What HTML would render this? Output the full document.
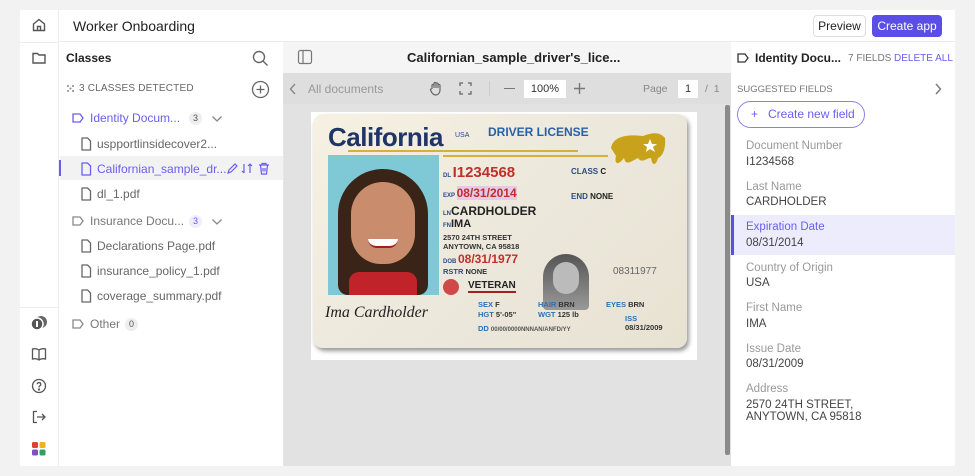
<!DOCTYPE html>
<html><head><meta charset="utf-8">
<style>
*{box-sizing:border-box;margin:0;padding:0}
body{width:975px;height:476px;background:#f2f2f2;font-family:"Liberation Sans",sans-serif;position:relative;overflow:hidden;color:#222}
.abs{position:absolute}
.app{left:20px;top:10px;width:935px;height:456px;background:#fff}
.rail{left:20px;top:10px;width:39px;height:456px;border-right:1px solid #ececec;background:#fff}
.hdr{left:59px;top:10px;width:896px;height:32px;border-bottom:1px solid #ececec;background:#fff}
.t{position:absolute;white-space:nowrap}
.file{font-size:12px;color:#666}
.ico{position:absolute}
.lbl{font-size:11.5px;color:#999}
.val{font-size:11.5px;color:#444}
</style></head><body>
<svg width="0" height="0" style="position:absolute"><defs>
<symbol id="doc" viewBox="0 0 12 14"><path d="M2 1H7.5L10.5 4V13H2Z" fill="none" stroke="currentColor" stroke-width="1.3" stroke-linejoin="round"/></symbol>
<symbol id="chev" viewBox="0 0 12 8"><path d="M1.5 1.5L6 6 10.5 1.5" fill="none" stroke="#888" stroke-width="1.3"/></symbol>
</defs></svg>
<div class="abs app"></div>
<div class="abs rail"></div>
<div class="abs hdr"></div>
<div class="abs" style="left:20px;top:42px;width:39px;height:1px;background:#ececec"></div>
<div class="abs" style="left:20px;top:307px;width:39px;height:1px;background:#ececec"></div>
<!-- rail icons -->
<svg class="ico" style="left:31px;top:17px" width="16" height="16" viewBox="0 0 16 16" fill="none" stroke="#555" stroke-width="1.4"><path d="M2.5 7L8 2.5 13.5 7V13.5H2.5Z"/><path d="M6.5 13.5V9.5H9.5V13.5"/></svg>
<svg class="ico" style="left:31px;top:50px" width="16" height="16" viewBox="0 0 16 16" fill="none" stroke="#555" stroke-width="1.4"><path d="M2 3.5H6.5L8 5H14V13H2Z"/></svg>
<svg class="ico" style="left:30px;top:315px" width="18" height="16" viewBox="0 0 18 16"><circle cx="11" cy="7" r="6" fill="#666"/><circle cx="7" cy="9" r="6" fill="#555" stroke="#fff" stroke-width="1.5"/><rect x="6" y="6" width="2" height="6" fill="#fff"/></svg>
<svg class="ico" style="left:31px;top:346px" width="16" height="16" viewBox="0 0 16 16" fill="none" stroke="#555" stroke-width="1.3"><path d="M8 4C6 2.5 3.5 2.5 1.5 3V13C3.5 12.5 6 12.5 8 14C10 12.5 12.5 12.5 14.5 13V3C12.5 2.5 10 2.5 8 4V14"/></svg>
<svg class="ico" style="left:31px;top:378px" width="16" height="16" viewBox="0 0 16 16" fill="none" stroke="#555" stroke-width="1.3"><circle cx="8" cy="8" r="6.5"/><path d="M6.2 6.3C6.2 4 9.8 4 9.8 6.3C9.8 7.8 8 7.8 8 9.5"/><circle cx="8" cy="11.5" r=".5" fill="#555"/></svg>
<svg class="ico" style="left:31px;top:409px" width="16" height="16" viewBox="0 0 16 16" fill="none" stroke="#555" stroke-width="1.3"><path d="M6 2.5H2.5V13.5H6"/><path d="M6 8H14M11 5L14 8 11 11"/></svg>
<svg class="ico" style="left:32px;top:442px" width="14" height="14" viewBox="0 0 14 14"><rect x="0" y="0" width="6" height="6" rx="1.5" fill="#e04030"/><rect x="7.5" y="0" width="6" height="6" rx="1.5" fill="#f0b020"/><rect x="0" y="7.5" width="6" height="6" rx="1.5" fill="#8050c0"/><rect x="7.5" y="7.5" width="6" height="6" rx="1.5" fill="#30a060"/></svg>

<div class="t" style="left:73px;top:18px;font-size:14px;color:#222">Worker Onboarding</div>
<div class="abs" style="left:813px;top:15px;width:53px;height:22px;border:1px solid #ddd;border-radius:4px;font-size:12px;text-align:center;line-height:20px;color:#222">Preview</div>
<div class="abs" style="left:872px;top:15px;width:70px;height:22px;background:#5a4ee6;border-radius:4px;font-size:12px;text-align:center;line-height:22px;color:#fff">Create app</div>

<!-- classes panel -->
<div class="t" style="left:66px;top:51px;font-size:12px;font-weight:bold;color:#222">Classes</div>
<svg class="ico" style="left:252px;top:50px" width="17" height="17" viewBox="0 0 17 17" fill="none" stroke="#666" stroke-width="1.4"><circle cx="7" cy="7" r="5.5"/><path d="M11 11L15.5 15.5"/></svg>
<svg class="ico" style="left:66px;top:84px" width="9" height="9" viewBox="0 0 9 9" fill="#888"><circle cx="2" cy="2" r="1"/><circle cx="7" cy="2" r="1"/><circle cx="4.5" cy="4.5" r="1"/><circle cx="2" cy="7" r="1"/><circle cx="7" cy="7" r="1"/></svg>
<div class="t" style="left:79px;top:83px;font-size:10px;color:#666;letter-spacing:.2px">3 CLASSES DETECTED</div>
<svg class="ico" style="left:251px;top:80px" width="19" height="19" viewBox="0 0 19 19" fill="none" stroke="#666" stroke-width="1.3"><circle cx="9.5" cy="9.5" r="8"/><path d="M9.5 5.5V13.5M5.5 9.5H13.5"/></svg>

<svg class="ico" style="left:72px;top:113px" width="12" height="10" viewBox="0 0 12 10" fill="none" stroke="#6a5ef0" stroke-width="1.3"><path d="M1 1H8L11 5 8 9H1Z"/></svg>
<div class="t" style="left:90px;top:111px;font-size:12px;color:#6a5ef0">Identity Docum...</div>
<div class="abs" style="left:189px;top:112px;width:13px;height:13px;border-radius:7px;background:#eee;font-size:9px;text-align:center;line-height:13px;color:#555">3</div>
<svg class="ico" style="left:211px;top:115px" width="12" height="8"><use href="#chev"/></svg>

<div class="abs" style="left:60px;top:156px;width:223px;height:24px;background:#f2f2f2"></div>
<div class="abs" style="left:59px;top:160px;width:2px;height:16px;background:#6a5ef0"></div>

<svg class="ico" style="left:80px;top:137px;color:#666" width="12" height="14"><use href="#doc"/></svg>
<div class="file t" style="left:97px;top:137px">uspportlinsidecover2...</div>
<svg class="ico" style="left:80px;top:162px;color:#6a5ef0" width="12" height="14"><use href="#doc"/></svg>
<div class="t" style="left:97px;top:162px;font-size:12px;color:#6a5ef0">Californian_sample_dr...</div>
<svg class="ico" style="left:226px;top:162px" width="46" height="13" viewBox="0 0 46 13" fill="none" stroke="#6a5ef0" stroke-width="1.2"><path d="M2 11L3 8 9 2 11 4 5 10Z"/><path d="M18 2V11M16 9L18 11M24 11V2M22 4L24 2 26 4"/><path d="M33 3H43M36 3V1.5H40V3M34.5 3L35.5 12H40.5L41.5 3M37 6V9.5M39 6V9.5"/></svg>
<svg class="ico" style="left:80px;top:187px;color:#666" width="12" height="14"><use href="#doc"/></svg>
<div class="file t" style="left:97px;top:187px">dl_1.pdf</div>

<svg class="ico" style="left:72px;top:216px" width="12" height="10" viewBox="0 0 12 10" fill="none" stroke="#888" stroke-width="1.3"><path d="M1 1H8L11 5 8 9H1Z"/></svg>
<div class="t" style="left:90px;top:214px;font-size:12px;color:#777">Insurance Docu...</div>
<div class="abs" style="left:189px;top:215px;width:13px;height:13px;border-radius:7px;background:#eeeefc;font-size:9px;text-align:center;line-height:13px;color:#6a5ef0">3</div>
<svg class="ico" style="left:211px;top:218px" width="12" height="8"><use href="#chev"/></svg>
<svg class="ico" style="left:80px;top:239px;color:#666" width="12" height="14"><use href="#doc"/></svg>
<div class="file t" style="left:97px;top:239px">Declarations Page.pdf</div>
<svg class="ico" style="left:80px;top:264px;color:#666" width="12" height="14"><use href="#doc"/></svg>
<div class="file t" style="left:97px;top:264px">insurance_policy_1.pdf</div>
<svg class="ico" style="left:80px;top:289px;color:#666" width="12" height="14"><use href="#doc"/></svg>
<div class="file t" style="left:97px;top:289px">coverage_summary.pdf</div>
<svg class="ico" style="left:72px;top:319px" width="12" height="10" viewBox="0 0 12 10" fill="none" stroke="#888" stroke-width="1.3"><path d="M1 1H8L11 5 8 9H1Z"/></svg>
<div class="t" style="left:90px;top:317px;font-size:12px;color:#777">Other</div>
<div class="abs" style="left:125px;top:318px;width:13px;height:13px;border-radius:7px;background:#eee;font-size:9px;text-align:center;line-height:13px;color:#555">0</div>

<!-- viewer -->
<div class="abs" style="left:283px;top:42px;width:448px;height:424px;background:#e2e2e2;border-left:1px solid #e6e6e6"></div>
<div class="abs" style="left:283px;top:42px;width:448px;height:31px;background:#f5f5f5"></div>
<div class="abs" style="left:283px;top:73px;width:448px;height:31px;background:#dedede"></div>
<svg class="ico" style="left:297px;top:49px" width="16" height="16" viewBox="0 0 16 16" fill="none" stroke="#777" stroke-width="1.2"><rect x="1.5" y="1.5" width="13" height="13" rx="2"/><path d="M6 1.5V14.5"/></svg>
<div class="t" style="left:407px;top:50px;font-size:13px;font-weight:bold;color:#222">Californian_sample_driver's_lice...</div>
<svg class="ico" style="left:289px;top:83px" width="8" height="12" viewBox="0 0 8 12" fill="none" stroke="#888" stroke-width="1.4"><path d="M6 1L1.5 6 6 11"/></svg>
<div class="t" style="left:308px;top:82px;font-size:12px;color:#999">All documents</div>
<svg class="ico" style="left:429px;top:81px" width="14" height="15" viewBox="0 0 14 15" fill="none" stroke="#666" stroke-width="1.2"><path d="M3 8V4.5A1 1 0 0 1 5 4.5V7M5 7V2.5A1 1 0 0 1 7 2.5V7M7 7V3A1 1 0 0 1 9 3V7M9 7V4.5A1 1 0 0 1 11 4.5V9C11 12 9 14 7 14 5 14 3 12.5 2 10L1.5 8.5A1 1 0 0 1 3 8"/></svg>
<svg class="ico" style="left:459px;top:82px" width="13" height="13" viewBox="0 0 13 13" fill="none" stroke="#666" stroke-width="1.3"><path d="M1 4V1H4M9 1H12V4M12 9V12H9M4 12H1V9"/></svg>
<div class="abs" style="left:489px;top:81px;width:1px;height:15px;background:#ccc"></div>
<div class="abs" style="left:504px;top:88px;width:11px;height:1.4px;background:#777"></div>
<div class="abs" style="left:524px;top:80px;width:42px;height:18px;background:#fff;font-size:11px;text-align:center;line-height:18px;color:#333">100%</div>
<svg class="ico" style="left:574px;top:83px" width="11" height="11" viewBox="0 0 11 11" stroke="#777" stroke-width="1.4"><path d="M5.5 0V11M0 5.5H11"/></svg>
<div class="t" style="left:643px;top:83px;font-size:10.5px;color:#888">Page</div>
<div class="abs" style="left:678px;top:80px;width:20px;height:18px;background:#fff;font-size:11px;text-align:center;line-height:18px;color:#333">1</div>
<div class="t" style="left:705px;top:83px;font-size:10.5px;color:#888">/ &nbsp;1</div>
<div class="abs" style="left:725px;top:105px;width:5px;height:350px;background:#8a8a8a;border-radius:2px"></div>

<!-- license card -->
<div class="abs" style="left:311px;top:112px;width:386px;height:248px;background:#fff"></div>
<div class="abs" style="left:313px;top:114px;width:374px;height:234px;border-radius:10px;background:linear-gradient(135deg,#f6f1e2,#ece8dc 50%,#e8e2d2);box-shadow:2px 3px 4px #999;overflow:hidden">
 <div class="t" style="left:15px;top:8px;font-size:26px;font-weight:bold;color:#1f3566;letter-spacing:-0.5px">California</div>
 <div class="t" style="left:142px;top:18px;font-size:7px;color:#2a4a88">USA</div>
 <div class="t" style="left:175px;top:11px;font-size:12px;font-weight:bold;color:#2860a8">DRIVER LICENSE</div>
 <div class="abs" style="left:35px;top:36px;width:230px;height:2px;background:#d4b23a"></div>
 <div class="abs" style="left:130px;top:41px;width:165px;height:2px;background:#d4b23a"></div>
 <svg class="abs" style="left:295px;top:14px" width="60" height="38" viewBox="0 0 60 38"><path d="M3 20C5 8 20 6 35 8 45 4 52 4 57 10 58 20 55 28 50 30 48 38 44 38 43 30 38 30 34 36 30 30 22 34 18 38 16 30 10 38 6 36 8 28 3 28Z" fill="#c9a21c"/><path d="M42 11L44 16 49 16 45 19 47 24 42 21 38 24 39 19 35 16 40 16Z" fill="#fff"/></svg>
 <div class="abs" style="left:15px;top:41px;width:111px;height:140px;background:#7fc8d6"></div>
 <div class="abs" style="left:25px;top:55px;width:90px;height:126px;border-radius:45px 45px 10px 10px;background:#3a2418"></div>
 <div class="abs" style="left:38px;top:68px;width:64px;height:82px;border-radius:32px 32px 30px 30px;background:#c98c6c"></div>
 <div class="abs" style="left:55px;top:125px;width:30px;height:9px;border-radius:0 0 15px 15px;background:#fff;border-bottom:2px solid #a02020"></div>
 <div class="abs" style="left:36px;top:158px;width:68px;height:23px;background:#c0242a;border-radius:10px 10px 0 0"></div>
 <div class="t" style="left:130px;top:50px;font-size:6px;font-weight:bold;color:#2a4a88">DL <span style="font-size:15px;color:#c0302a">I1234568</span></div>
 <div class="t" style="left:258px;top:53px;font-size:8px;font-weight:bold;color:#2a4a88">CLASS <span style="color:#222">C</span></div>
 <div class="t" style="left:130px;top:72px;font-size:6px;font-weight:bold;color:#2a4a88">EXP <span style="font-size:12px;color:#c0302a;background:#e6c8e8">08/31/2014</span></div>
 <div class="t" style="left:258px;top:78px;font-size:8px;font-weight:bold;color:#2a4a88">END <span style="color:#222">NONE</span></div>
 <div class="t" style="left:130px;top:90px;font-size:6px;font-weight:bold;color:#2a4a88">LN<span style="font-size:12px;color:#222">CARDHOLDER</span></div>
 <div class="t" style="left:130px;top:104px;font-size:6px;font-weight:bold;color:#2a4a88">FN<span style="font-size:11px;color:#222">IMA</span></div>
 <div class="t" style="left:130px;top:119px;font-size:7.5px;font-weight:bold;color:#333;line-height:9px">2570 24TH STREET<br>ANYTOWN, CA 95818</div>
 <div class="t" style="left:130px;top:138px;font-size:6px;font-weight:bold;color:#2a4a88">DOB <span style="font-size:12px;color:#c0302a">08/31/1977</span></div>
 <div class="t" style="left:130px;top:153px;font-size:7.5px;font-weight:bold;color:#2a4a88">RSTR <span style="color:#333">NONE</span></div>
 <div class="abs" style="left:130px;top:165px;width:16px;height:16px;border-radius:8px;background:#d04848"></div>
 <div class="t" style="left:155px;top:166px;font-size:10px;font-weight:bold;color:#222;border-bottom:2px solid #a02020">VETERAN</div>
 <div class="abs" style="left:230px;top:140px;width:46px;height:56px;border-radius:23px 23px 4px 4px;background:linear-gradient(#555,#999)"></div>
 <div class="abs" style="left:240px;top:148px;width:26px;height:32px;border-radius:13px;background:#bbb"></div>
 <div class="t" style="left:300px;top:152px;font-size:10px;color:#666">08311977</div>
 <div class="t" style="left:12px;top:190px;font-size:16px;font-style:italic;font-family:'Liberation Serif',serif;color:#222">Ima Cardholder</div>
 <div class="t" style="left:165px;top:186px;font-size:7.5px;font-weight:bold;color:#2a70b8;line-height:10px">SEX <span style="color:#333">F</span><br>HGT <span style="color:#333">5'-05"</span></div>
 <div class="t" style="left:225px;top:186px;font-size:7.5px;font-weight:bold;color:#2a70b8;line-height:10px">HAIR <span style="color:#333">BRN</span><br>WGT <span style="color:#333">125 lb</span></div>
 <div class="t" style="left:293px;top:186px;font-size:7.5px;font-weight:bold;color:#2a70b8">EYES <span style="color:#333">BRN</span></div>
 <div class="t" style="left:312px;top:200px;font-size:7.5px;font-weight:bold;color:#2a70b8;line-height:9px">ISS<br><span style="color:#333">08/31/2009</span></div>
 <div class="t" style="left:165px;top:210px;font-size:7.5px;font-weight:bold;color:#2a70b8">DD <span style="color:#555;font-size:6px">00/00/0000NNNAN/ANFD/YY</span></div>
</div>

<!-- right panel -->
<svg class="ico" style="left:737px;top:53px" width="12" height="10" viewBox="0 0 12 10" fill="none" stroke="#333" stroke-width="1.3"><path d="M1 1H8L11 5 8 9H1Z"/></svg>
<div class="t" style="left:755px;top:51px;font-size:12px;font-weight:bold;color:#222">Identity Docu...</div>
<div class="t" style="left:848px;top:53px;font-size:10px;color:#777">7 FIELDS</div>
<div class="t" style="left:894px;top:53px;font-size:10px;color:#6a5ef0">DELETE ALL</div>
<div class="t" style="left:737px;top:84px;font-size:9.5px;color:#777">SUGGESTED FIELDS</div>
<svg class="ico" style="left:934px;top:83px" width="8" height="12" viewBox="0 0 8 12" fill="none" stroke="#777" stroke-width="1.4"><path d="M2 1L6.5 6 2 11"/></svg>
<div class="abs" style="left:737px;top:101px;width:128px;height:27px;border:1.5px solid #8a80ee;border-radius:14px;font-size:12px;color:#6a5ef0;line-height:24px;padding-left:13px">+&nbsp;&nbsp; Create new field</div>
<div class="abs" style="left:731px;top:215px;width:224px;height:40px;background:#ececfd"></div>
<div class="abs" style="left:731px;top:215px;width:3px;height:40px;background:#5a4ee6"></div>
<div class="t lbl" style="left:746px;top:140px">Document Number</div><div class="t val" style="left:746px;top:156px">I1234568</div>
<div class="t lbl" style="left:746px;top:181px">Last Name</div><div class="t val" style="left:746px;top:196px">CARDHOLDER</div>
<div class="t lbl" style="left:746px;top:221px;color:#6a5ef0">Expiration Date</div><div class="t val" style="left:746px;top:237px">08/31/2014</div>
<div class="t lbl" style="left:746px;top:262px">Country of Origin</div><div class="t val" style="left:746px;top:277px">USA</div>
<div class="t lbl" style="left:746px;top:302px">First Name</div><div class="t val" style="left:746px;top:318px">IMA</div>
<div class="t lbl" style="left:746px;top:343px">Issue Date</div><div class="t val" style="left:746px;top:358px">08/31/2009</div>
<div class="t lbl" style="left:746px;top:383px">Address</div><div class="t val" style="left:746px;top:399px;line-height:12px">2570 24TH STREET,<br>ANYTOWN, CA 95818</div>
</body></html>
